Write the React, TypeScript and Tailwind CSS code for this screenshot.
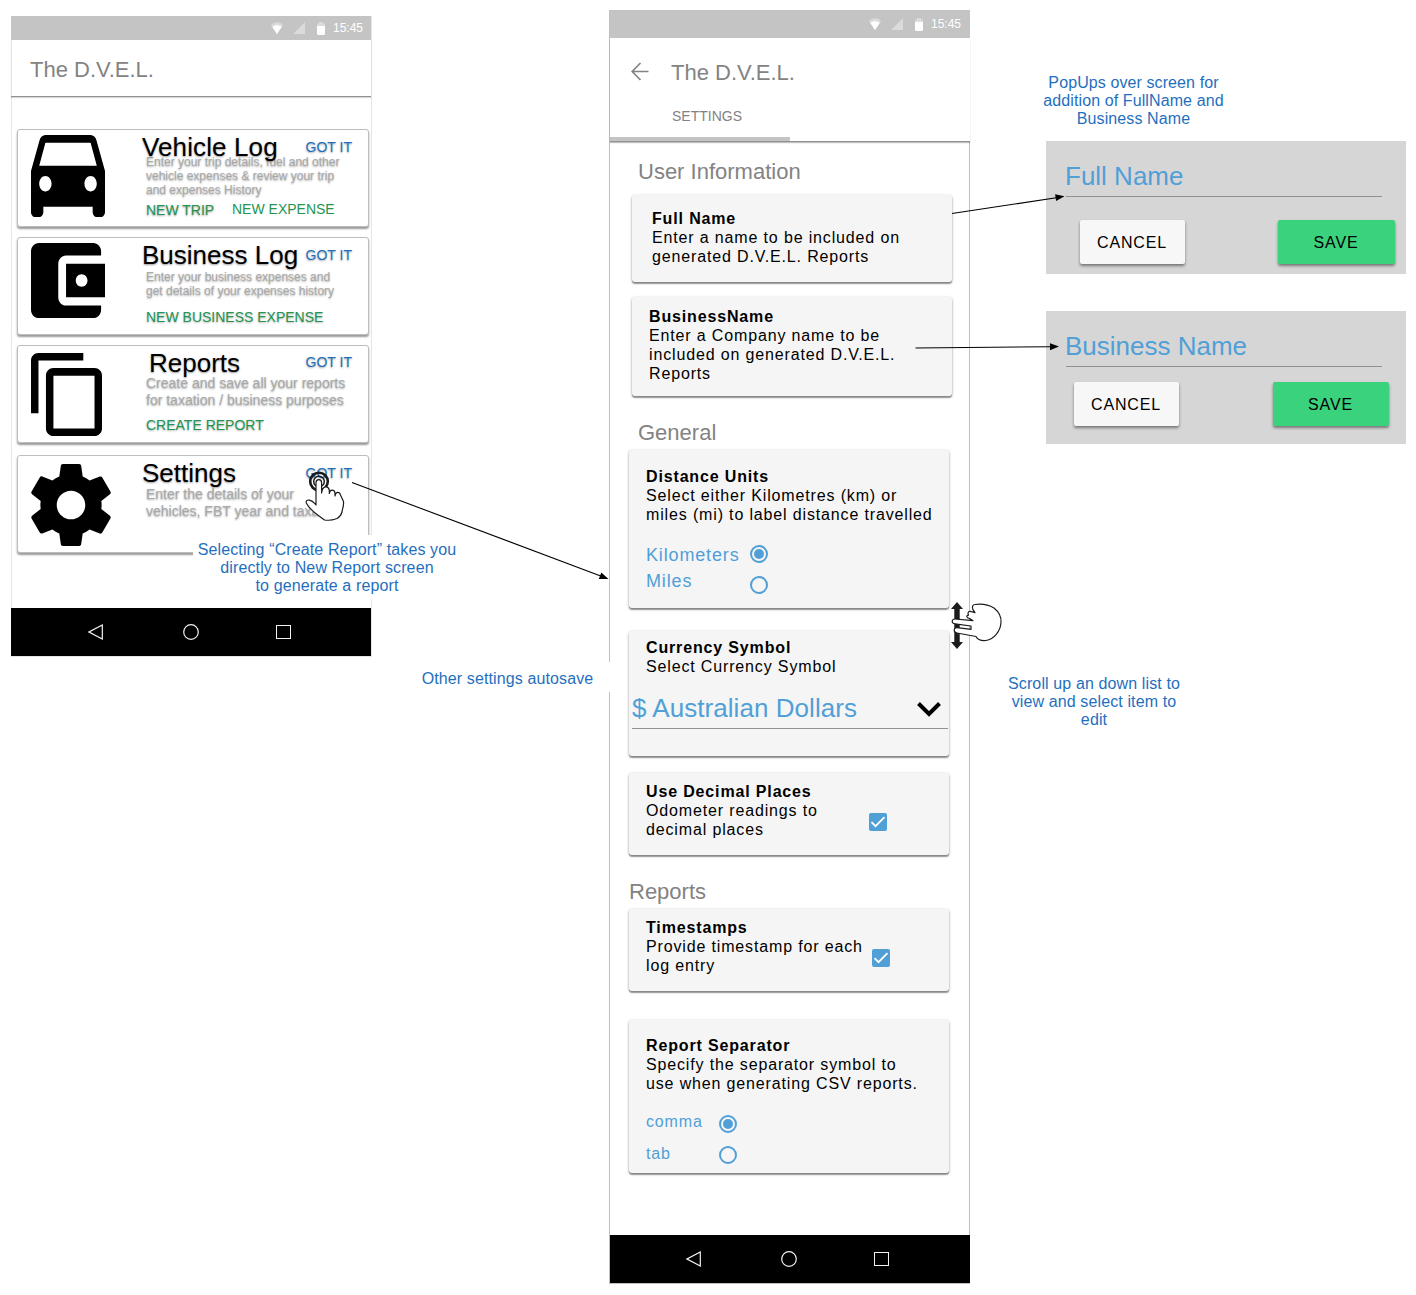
import React from "react";

type IconProps = { className?: string };

const CarIcon = ({ className }: IconProps) => (
  <svg className={className} viewBox="3 5 18 16" preserveAspectRatio="none" fill="currentColor">
    <path d="M18.92 6.01C18.72 5.42 18.16 5 17.5 5h-11c-.66 0-1.21.42-1.42 1.01L3 12v8c0 .55.45 1 1 1h1c.55 0 1-.45 1-1v-1h12v1c0 .55.45 1 1 1h1c.55 0 1-.45 1-1v-8l-2.08-5.99zM6.5 16c-.83 0-1.5-.67-1.5-1.5S5.67 13 6.5 13s1.5.67 1.5 1.5S7.33 16 6.5 16zm11 0c-.83 0-1.5-.67-1.5-1.5s.67-1.5 1.5-1.5 1.5.67 1.5 1.5-.67 1.5-1.5 1.5zM5 11l1.5-4.5h11L19 11H5z" />
  </svg>
);

const WalletIcon = ({ className }: IconProps) => (
  <svg className={className} viewBox="3 3 19 18" preserveAspectRatio="none" fill="currentColor">
    <path d="M21 18v1c0 1.1-.9 2-2 2H5c-1.11 0-2-.9-2-2V5c0-1.1.89-2 2-2h14c1.1 0 2 .9 2 2v1h-9c-1.11 0-2 .9-2 2v8c0 1.1.89 2 2 2h9zm-9-2h10V8H12v8zm4-2.5c-.83 0-1.5-.67-1.5-1.5s.67-1.5 1.5-1.5 1.5.67 1.5 1.5-.67 1.5-1.5 1.5z" />
  </svg>
);

const CopyIcon = ({ className }: IconProps) => (
  <svg className={className} viewBox="2 1 19 22" preserveAspectRatio="none" fill="currentColor">
    <path d="M16 1H4c-1.1 0-2 .9-2 2v14h2V3h12V1zm3 4H8c-1.1 0-2 .9-2 2v14c0 1.1.9 2 2 2h11c1.1 0 2-.9 2-2V7c0-1.1-.9-2-2-2zm0 16H8V7h11v14z" />
  </svg>
);

const GearIcon = ({ className }: IconProps) => (
  <svg className={className} viewBox="2.2 2 19.6 20" preserveAspectRatio="none" fill="currentColor">
    <path d="M19.43 12.98c.04-.32.07-.64.07-.98s-.03-.66-.07-.98l2.11-1.65c.19-.15.24-.42.12-.64l-2-3.46c-.12-.22-.39-.3-.61-.22l-2.49 1c-.52-.4-1.08-.73-1.69-.98l-.38-2.65C14.46 2.18 14.25 2 14 2h-4c-.25 0-.46.18-.49.42l-.38 2.65c-.61.25-1.17.59-1.69.98l-2.49-1c-.23-.09-.49 0-.61.22l-2 3.46c-.13.22-.07.49.12.64l2.11 1.65c-.04.32-.07.65-.07.98s.03.66.07.98l-2.11 1.65c-.19.15-.24.42-.12.64l2 3.46c.12.22.39.3.61.22l2.49-1c.52.4 1.08.73 1.69.98l.38 2.65c.03.24.24.42.49.42h4c.25 0 .46-.18.49-.42l.38-2.65c.61-.25 1.17-.59 1.69-.98l2.49 1c.23.09.49 0 .61-.22l2-3.46c.12-.22.07-.49-.12-.64l-2.11-1.65zM12 15.5c-1.93 0-3.5-1.57-3.5-3.5s1.57-3.5 3.5-3.5 3.5 1.57 3.5 3.5-1.57 3.5-3.5 3.5z" />
  </svg>
);

/* Wi-Fi, signal and battery glyphs with the clock */
const StatusBar = ({ className }: IconProps) => (
  <div className={`flex w-[360px] shrink-0 items-center justify-end bg-[#c4c4c4] text-[12px] text-white ${className}`}>
    <svg className="mr-[10px] h-3 w-3" viewBox="0 0 12 12">
      <path d="M6 12 0 3.2C3.5-.6 8.5-.6 12 3.2Z" fill="#fff" fillOpacity=".4" />
      <path d="M6 12 1.4 5C4 2.6 8 2.6 10.6 5Z" fill="#fff" />
    </svg>
    <svg className="mr-[12px] h-3 w-3" viewBox="0 0 12 12">
      <path d="M12 0v12H0Z" fill="#fff" fillOpacity=".4" />
    </svg>
    <svg className="mr-[8px] h-[13px] w-2" viewBox="0 0 8 13">
      <path d="M0 5V1.5h2V0h4v1.500h2V5Z" fill="#fff" fillOpacity=".4" />
      <path d="M0 4h8v7.500q0 1.500-1.500 1.500h-5Q0 13 0 11.500Z" fill="#fff" />
    </svg>
    <span className="leading-4">15:45</span>
  </div>
);

const NavBar = ({ className }: IconProps) => (
  <div className={`flex h-12 w-[360px] shrink-0 items-center bg-black text-[#f2f2f2] ${className}`}>
    <svg className="h-4 w-[15px]" viewBox="0 0 15 16" fill="none" stroke="currentColor" strokeWidth="1.200">
      <path d="M14.300 1v14L1 8Z" />
    </svg>
    <svg className="ml-[80px] h-4 w-4" viewBox="0 0 16 16" fill="none" stroke="currentColor" strokeWidth="1.200">
      <circle cx="8" cy="8" r="7.300" />
    </svg>
    <div className="ml-[77px] h-[14px] w-[15px] border border-current" />
  </div>
);

const Radio = ({ checked }: { checked?: boolean }) => (
  <div className="flex h-[18px] w-[18px] items-center justify-center rounded-full border-2 border-[#519fd7]">
    {checked && <div className="h-[10px] w-[10px] rounded-full bg-[#519fd7]" />}
  </div>
);

const Checkbox = () => (
  <div className="h-[18px] w-[18px] rounded-[2px] bg-[#519fd7]">
    <svg viewBox="0 0 18 18" fill="none" stroke="#fff" strokeWidth="1.800">
      <path d="m2.500 9.200 4 4 9-9" />
    </svg>
  </div>
);

const GotIt = ({ className }: IconProps) => (
  <span className={`ml-auto mr-[16px] text-[14px] leading-4 text-[#1f6fbe] [text-shadow:0_1px_2px_rgba(0,0,0,.35)] ${className}`}>GOT IT</span>
);

type LogCardProps = {
  icon: React.ReactNode;
  title: string;
  titleClass?: string;
  gotItClass?: string;
  body: string[];
  bodyClass: string;
  className: string;
  children?: React.ReactNode;
};

const LogCard = ({ icon, title, titleClass = "", gotItClass = "mt-[7px]", body, bodyClass, className, children }: LogCardProps) => (
  <section
    className={`ml-[6px] flex w-[352px] shrink-0 rounded-[3px] border border-[#bdbdbd] bg-white shadow-[0_2px_2px_rgba(0,0,0,.4)] ${className}`}
  >
    <div className="w-[124px] shrink-0 pl-[13px]">{icon}</div>
    <div className="flex min-w-0 flex-1 flex-col pt-[2px]">
      <div className="relative flex h-[30px] items-start">
        <h2 className={`text-[26px] leading-[30px] text-black [text-shadow:0_1px_2px_rgba(0,0,0,.4)] ${titleClass}`}>{title}</h2>
        <GotIt className={gotItClass} />
      </div>
      <div className={`ml-[4px] text-[#a9a9a9] [text-shadow:0_1px_2px_rgba(0,0,0,.35)] ${bodyClass}`}>
        {body.map((line) => (
          <div key={line}>{line}</div>
        ))}
      </div>
      <div className="ml-[4px] mt-auto flex text-[14px] leading-4 text-[#24944f]">{children}</div>
    </div>
  </section>
);

const SettingCard = ({ className, children }: { className: string; children: React.ReactNode }) => (
  <section
    className={`w-[320px] shrink-0 rounded-[3px] bg-[#f5f5f5] text-[16px] leading-[19px] tracking-[.85px] text-black shadow-[0_1px_3px_rgba(0,0,0,.35),0_2px_1px_rgba(0,0,0,.3)] ${className}`}
  >
    {children}
  </section>
);

const SettingText = ({ title, lines }: { title: string; lines: string[] }) => (
  <div>
    <div className="font-bold">{title}</div>
    {lines.map((line) => (
      <div key={line}>{line}</div>
    ))}
  </div>
);

type PopupProps = { label: string; className: string; rowClass: string; saveClass: string };

const Popup = ({ label, className, rowClass, saveClass }: PopupProps) => (
  <section className={`h-[133px] w-[360px] bg-[#d6d6d6] pt-[20px] ${className}`}>
    <div className="ml-[19px] text-[26px] leading-[30px] text-[#519fd7]">{label}</div>
    <div className="ml-[20px] mt-[5px] h-px w-[316px] bg-[#919191]" />
    <div className={`flex text-[16px] tracking-[.85px] text-black ${rowClass}`}>
      <button className="h-[44px] w-[105px] rounded-[2px] bg-[#f7f7f7] pt-[2px] pr-px shadow-[0_2px_3px_rgba(0,0,0,.45)]">CANCEL</button>
      <button className={`h-[44px] rounded-[2px] bg-[#3ad27d] pt-[2px] pr-px shadow-[0_2px_3px_rgba(0,0,0,.45)] ${saveClass}`}>SAVE</button>
    </div>
  </section>
);

const Arrows = () => (
  <svg className="pointer-events-none absolute inset-0 h-full w-full" viewBox="0 0 1416 1295" stroke="#000" strokeWidth="1.100">
    <path d="M352 482.500 602 576.500" />
    <path d="M0 0-9-3.500v7Z" transform="translate(608.500 579) rotate(20.600)" stroke="none" />
    <path d="M952 213.500 1058 197.500" />
    <path d="M0 0-9-3.500v7Z" transform="translate(1064.500 196.300) rotate(-8.500)" stroke="none" />
    <path d="M915.500 348 1052 346.700" />
    <path d="M0 0-9-3.500v7Z" transform="translate(1059 346.600) rotate(-.5)" stroke="none" />
  </svg>
);

const TapHand = ({ className }: IconProps) => (
  <svg className={className} viewBox="0 0 40 52" fill="none" stroke="#1b1b1b">
    <circle cx="14" cy="11.500" r="8.800" strokeWidth="2.600" />
    <circle cx="14" cy="11.500" r="5.300" strokeWidth="1.500" />
    <path
      d="M11 35V12.800c0-4.200 5.600-4.200 5.600 0V23c.8-7.500 6.700-7.500 7.700-3v3.500c.7-4.500 5-4.200 5.700-.7V26c.7-4.800 4.700-4.500 5.500-1l3 6.500C39 36 37.500 38 37 42c-1.800 7-9.500 9-17.500 8C15 46.500 6 42 1.300 33 .2 28.500 6.500 29 11 35Z"
      fill="#fff"
      strokeWidth="1.200"
      strokeLinejoin="round"
    />
  </svg>
);

const ScrollHand = ({ className }: IconProps) => (
  <svg className={className} viewBox="0 0 52 50">
    <path d="M6 1 0 8h3.300v33H0l6 7 6-7H8.700V8H12Z" fill="#1b1b1b" />
    <path
      d="M24 3.500C32 2.500 38 4 43 7c5 4 7.500 9 7 14.500-.6 9-7 16.500-15 18-5 .5-8.500-1-10-4L6 32c-4-.8-3.500-5.500 0-5.300L20 28.300V25L4 22.800c-4-.5-3.500-5 0-4.800l18 1.700-3-2c-4-1-4-3.500-1.500-3.500-1.500-3 .5-4.500 3-3.500l3.500 1-2-3C20.500 5.500 22 3.700 24 3.500Z"
      fill="#fff"
      stroke="#1b1b1b"
      strokeWidth="1.200"
      strokeLinejoin="round"
    />
  </svg>
);

const noteClass = "absolute bg-white text-center text-[16px] leading-[18px] tracking-[.12px] text-[#1f6fbe]";

export default function App() {
  return (
    <main className="relative flex h-[1295px] w-[1416px] items-start overflow-hidden bg-white font-['Liberation_Sans',Arial,sans-serif]">
      {/* Home screen */}
      <div className="ml-[11px] mt-[16px] flex h-[641px] w-[361px] shrink-0 flex-col bg-white shadow-[inset_0_0_0_1px_#e6e6e6]">
        <StatusBar className="h-6 pr-[8px]" />
        <header className="h-[57px] w-[360px] shrink-0 border-b border-[#919191] pl-[19px] pt-[18px] text-[22px] leading-6 text-[#838383] shadow-[0_1px_1px_rgba(0,0,0,.15)]">
          The D.V.E.L.
        </header>
        <LogCard
          className="mt-[32px] h-[98px]"
          icon={<CarIcon className="mt-[5px] h-[82px] w-[74px]" />}
          title="Vehicle Log"
          titleClass="tracking-[.12px]"
          body={["Enter your trip details, fuel and other", "vehicle expenses & review your trip", "and expenses History"]}
          bodyClass="mt-[-7px] text-[12px] leading-[14px]"
        >
          <span className="mb-[8px] w-[86px] [text-shadow:0_1px_2px_rgba(0,0,0,.4)]">NEW TRIP</span>
          <span className="mt-[-1px]">NEW EXPENSE</span>
        </LogCard>
        <LogCard
          className="mt-[10px] h-[98px]"
          icon={<WalletIcon className="mt-[5px] h-[75px] w-[74px]" />}
          title="Business Log"
          body={["Enter your business expenses and", "get details of your expenses history"]}
          bodyClass="text-[12px] leading-[14px]"
        >
          <span className="mb-[9px] [text-shadow:0_1px_2px_rgba(0,0,0,.3)]">NEW BUSINESS EXPENSE</span>
        </LogCard>
        <LogCard
          className="mt-[10px] h-[98px]"
          icon={<CopyIcon className="mt-[7px] h-[83px] w-[71px]" />}
          title="Reports"
          titleClass="ml-[7px]"
          gotItClass="mt-[6px]"
          body={["Create and save all your reports", "for taxation / business purposes"]}
          bodyClass="mt-[-3px] text-[14px] leading-[17px]"
        >
          <span className="mb-[9px] [text-shadow:0_1px_2px_rgba(0,0,0,.3)]">CREATE REPORT</span>
        </LogCard>
        <LogCard
          className="mt-[12px] h-[98px]"
          icon={<GearIcon className="mt-[8px] h-[82px] w-[80px]" />}
          title="Settings"
          body={["Enter the details of your", "vehicles, FBT year and taxa"]}
          bodyClass="mt-[-2px] text-[14px] leading-[17px]"
        />
        <div className="mt-auto mb-px">
          <NavBar className="pl-[77px]" />
        </div>
      </div>

      {/* Settings screen */}
      <div className="ml-[237px] mt-[10px] flex h-[1274px] w-[361px] shrink-0 flex-col border-x border-b border-[#bfbfbf] bg-white">
        <StatusBar className="h-7 pr-[9px]" />
        <header className="w-[360px] shrink-0 border-b border-[#919191] bg-white text-[#838383] shadow-[0_1px_1px_rgba(0,0,0,.25)]">
          <div className="flex h-[68px] items-center">
            <svg className="mb-[2px] ml-[21px] h-[19px] w-[18px]" viewBox="0 0 18 19" fill="none" stroke="currentColor" strokeWidth="1.700">
              <path d="M17.500 9.500H1M9.500 1 1.200 9.500l8.300 8.500" />
            </svg>
            <h1 className="ml-[22px] mt-[2px] text-[22px] leading-6">The D.V.E.L.</h1>
          </div>
          <div className="flex h-[31px] w-[194px] justify-center text-[14px] leading-5">SETTINGS</div>
          <div className="h-1 w-[180px] bg-[#c4c4c4]" />
        </header>

        <h2 className="ml-[28px] mt-[18px] text-[22px] leading-6 text-[#838383]">User Information</h2>
        <SettingCard className="ml-[22px] mt-[11px] h-[87px] pl-[20px] pt-[14px]">
          <SettingText title="Full Name" lines={["Enter a name to be included on", "generated D.V.E.L. Reports"]} />
        </SettingCard>
        <SettingCard className="ml-[22px] mt-[15px] h-[99px] pl-[17px] pt-[10px]">
          <SettingText title="BusinessName" lines={["Enter a Company name to be", "included on generated D.V.E.L.", "Reports"]} />
        </SettingCard>

        <h2 className="ml-[28px] mt-[25px] text-[22px] leading-6 text-[#838383]">General</h2>
        <SettingCard className="ml-[19px] mt-[5px] h-[158px] pl-[17px] pt-[17px]">
          <SettingText title="Distance Units" lines={["Select either Kilometres (km) or", "miles (mi) to label distance travelled"]} />
          <div className="mt-[18px] flex text-[18px] leading-[26px] text-[#519fd7]">
            <div className="w-[104px]">
              <div>Kilometers</div>
              <div>Miles</div>
            </div>
            <div className="mt-[3px] flex flex-col gap-[13px]">
              <Radio checked />
              <Radio />
            </div>
          </div>
        </SettingCard>
        <SettingCard className="ml-[19px] mt-[23px] h-[125px] pt-[7px]">
          <div className="pl-[17px]">
            <SettingText title="Currency Symbol" lines={["Select Currency Symbol"]} />
          </div>
          <div className="ml-[3px] mt-[17px] flex h-[36px] w-[316px] items-start border-b border-[#919191] text-[26px] leading-[30px] tracking-[.05px] text-[#519fd7]">
            <span>$ Australian Dollars</span>
            <svg className="ml-auto mr-[7px] mt-[9px] h-[15px] w-6" viewBox="0 0 24 15" fill="none" stroke="#000" strokeWidth="4">
              <path d="M1.500 1.500 12 12 22.500 1.500" />
            </svg>
          </div>
        </SettingCard>
        <SettingCard className="ml-[19px] mt-[17px] flex h-[82px] pl-[17px] pt-[9px]">
          <SettingText title="Use Decimal Places" lines={["Odometer readings to", "decimal places"]} />
          <div className="ml-auto mr-[62px] mt-[31px]">
            <Checkbox />
          </div>
        </SettingCard>

        <h2 className="ml-[19px] mt-[25px] text-[22px] leading-6 text-[#838383]">Reports</h2>
        <SettingCard className="ml-[19px] mt-[5px] flex h-[82px] pl-[17px] pt-[9px]">
          <SettingText title="Timestamps" lines={["Provide timestamp for each", "log entry"]} />
          <div className="ml-auto mr-[59px] mt-[31px]">
            <Checkbox />
          </div>
        </SettingCard>
        <SettingCard className="ml-[19px] mt-[29px] h-[153px] pl-[17px] pt-[16px]">
          <SettingText title="Report Separator" lines={["Specify the separator symbol to", "use when generating CSV reports."]} />
          <div className="mt-[13px] flex leading-8 text-[#519fd7]">
            <div className="w-[73px]">
              <div>comma</div>
              <div>tab</div>
            </div>
            <div className="mt-[9px] flex flex-col gap-[13px]">
              <Radio checked />
              <Radio />
            </div>
          </div>
        </SettingCard>
        <div className="mt-auto">
          <NavBar className="pl-[76px]" />
        </div>
      </div>

      {/* Name entry pop-ups */}
      <div className="ml-[76px] flex w-[360px] shrink-0 flex-col pt-[74px]">
        <p className="ml-[-3px] w-[181px] self-start whitespace-nowrap text-center text-[16px] leading-[18px] tracking-[.1px] text-[#1f6fbe]">
          PopUps over screen for
          <br />
          addition of FullName and
          <br />
          Business Name
        </p>
        <Popup label="Full Name" className="mt-[13px]" rowClass="mt-[23px] pl-[34px]" saveClass="ml-[93px] w-[117px]" />
        <Popup label="Business Name" className="mt-[37px]" rowClass="mt-[15px] pl-[28px]" saveClass="ml-[94px] w-[116px]" />
      </div>

      {/* Annotations on the canvas */}
      <p className={`${noteClass} left-[193px] top-[535px] h-[64px] w-[268px] pt-[6px]`}>
        Selecting “Create Report” takes you
        <br />
        directly to New Report screen
        <br />
        to generate a report
      </p>
      <p className={`${noteClass} left-[403px] top-[662px] h-[30px] w-[209px] pt-[8px]`}>Other settings autosave</p>
      <p className={`${noteClass} left-[1003px] top-[675px] w-[182px]`}>
        Scroll up an down list to
        <br />
        view and select item to
        <br />
        edit
      </p>
      <Arrows />
      <TapHand className="absolute left-[305px] top-[470px] h-[52px] w-[40px]" />
      <ScrollHand className="absolute left-[951px] top-[601px] h-[50px] w-[52px]" />
    </main>
  );
}
